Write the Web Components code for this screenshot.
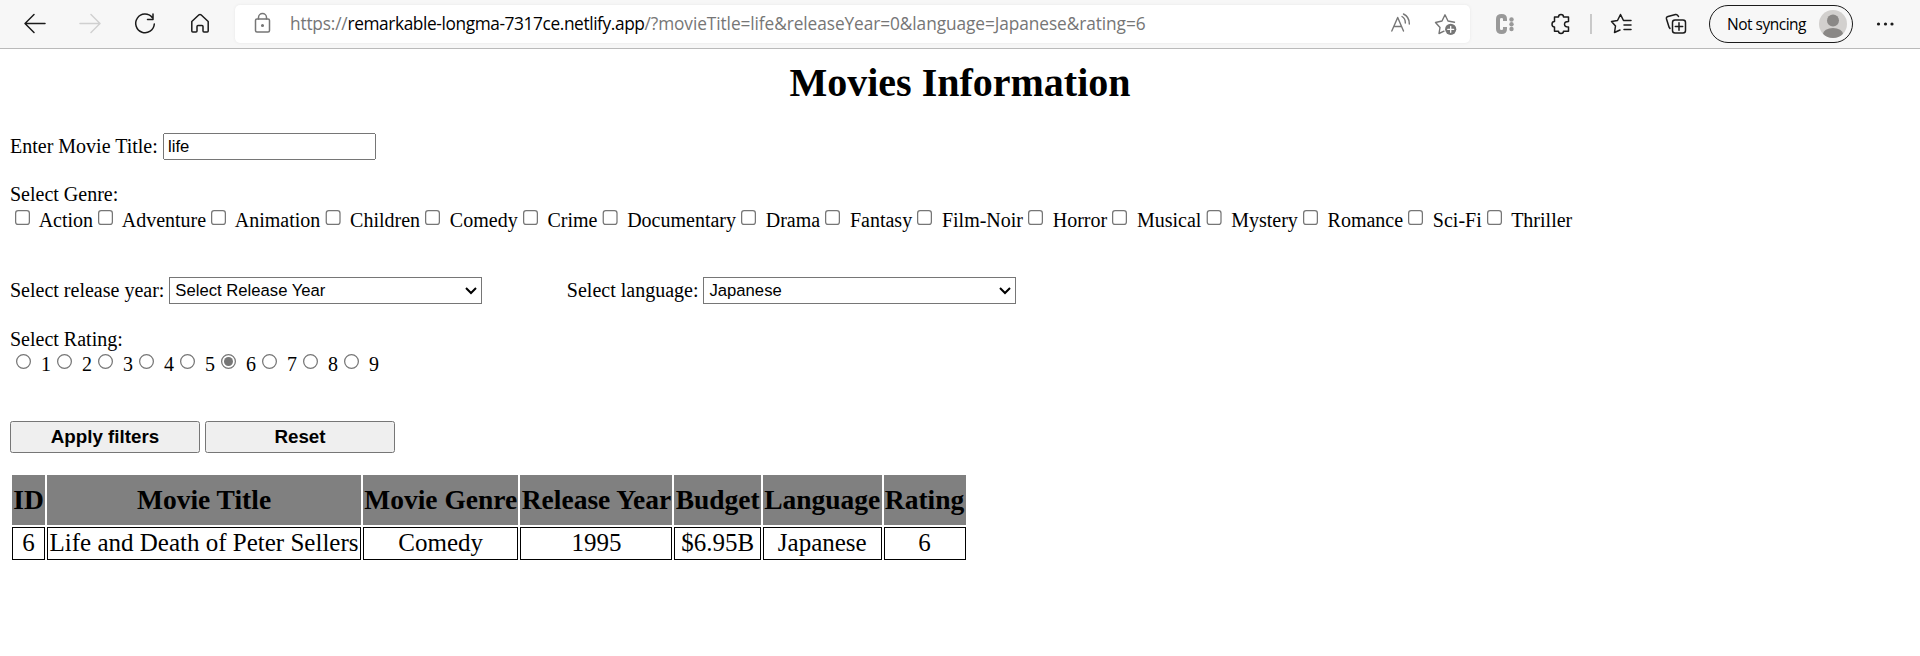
<!DOCTYPE html>
<html lang="en">
<head>
<meta charset="utf-8">
<title>Movies Information</title>
<style>
html,body{margin:0;background:#fff;overflow:hidden}
body{font-family:"Liberation Serif",serif;color:#000}
</style>
</head>
<body>
<browser-bar></browser-bar>
<movies-page></movies-page>
<script>
class ShadowElement extends HTMLElement {
  constructor(){ super(); this.attachShadow({mode:'open'}); }
  paint(html){ this.shadowRoot.innerHTML = html; }
}

/* Text stretched or tightened to a given width through letter-spacing. */
customElements.define('fit-text', class extends ShadowElement {
  connectedCallback(){
    this.paint('<style>:host{display:inline-block;white-space:pre}span{display:inline-block}</style><span></span>');
    const s = this.shadowRoot.querySelector('span');
    s.textContent = this.getAttribute('text');
    const want = +this.getAttribute('width');
    s.style.letterSpacing = (want - s.getBoundingClientRect().width) / s.textContent.length + 'px';
    this.style.width = want + 'px';
  }
});

customElements.define('browser-bar', class extends ShadowElement {
  connectedCallback(){
    this.paint(`<style>
:host{display:flex;align-items:flex-start;box-sizing:border-box;height:49px;background:#f7f7f7;border-bottom:1px solid #bababa;font-family:"Open Sans","Noto Sans",sans-serif}
svg{display:block;flex:none;fill:none;stroke:#1b1b1b;stroke-width:1.5;stroke-linecap:round;stroke-linejoin:round}
.address{display:flex;width:1235px;height:38px;margin-top:5px;background:#fff;border-radius:5px;box-shadow:0 0 3px #e6e6e6}
.address svg{margin-top:-5px;stroke:#767676}
.url{width:1101px;line-height:37px;font-size:17.3px;color:#767676;white-space:nowrap;display:flex}
.url b{font-weight:400;color:#000}
.profile{box-sizing:border-box;display:flex;align-items:center;justify-content:space-between;margin-top:5px;width:144px;height:38px;border:1.5px solid #1b1b1b;border-radius:19px;padding:0 5px 0 17px;font-size:15.5px}
</style>
<svg width="235" height="48">
<path d="M45 23.5H25.5M34 14.5L25 23.5L34 32.5"/>
<path stroke="#d0d0d0" d="M80 23.5H99.5M91 14.5L100 23.5L91 32.5"/>
<path d="M152.2 17.5A9.3 9.3 0 1 0 154.3 24M153 14V19.5H147.500"/>
<path d="M191.800 21.500L199 14.800Q200 14 201 14.800L208.200 21.500V31Q208.200 32 207.200 32H204Q203 32 203 31V26.500Q203 25.500 202 25.500H198Q197 25.500 197 26.500V31Q197 32 196 32H192.800Q191.800 32 191.800 31Z"/>
</svg>
<div class="address">
<svg width="55" height="48"><rect x="20.500" y="19" width="14" height="13" rx="1.500"/><path d="M23.500 19V17.500A4 4 0 0 1 31.500 17.500V19"/><circle cx="27.500" cy="25.500" r=".8" fill="#767676"/></svg>
<div class="url"><fit-text text="https://" width="57.500"></fit-text><b><fit-text text="remarkable-longma-7317ce.netlify.app" width="297"></fit-text></b><fit-text text="/?movieTitle=life&amp;releaseYear=0&amp;language=Japanese&amp;rating=6" width="501"></fit-text></div>
<svg width="79" height="48" viewBox="1391 0 79 48"><path stroke-width="1.400" d="M1391.800 31L1397.700 17.500L1403.500 31M1393.800 26.500H1401.500M1402 16.500Q1405.500 18.500 1405.300 23M1403.500 14Q1409.500 17 1409.300 24"/><path stroke-width="1.400" d="M1444 31.200L1439 33.500L1440 27.500L1435.500 22.500L1442 21L1445 14.800L1448 21L1454.500 22.200"/><circle cx="1450.700" cy="29.300" r="5.600" fill="#767676" stroke="none"/><path stroke="#fff" stroke-width="1.300" d="M1447.700 29.300H1453.700M1450.700 26.300V32.300"/></svg>
</div>
<svg width="239" height="48" viewBox="1470 0 239 48">
<path stroke="#999" stroke-width="4" stroke-linecap="butt" d="M1505 21V19Q1505 16 1501.700 16Q1498 16 1498 19V29Q1498 32 1501.700 32Q1505 32 1505 29V27"/>
<g fill="#999" stroke="none"><circle cx="1511.500" cy="19.500" r="2.200"/><circle cx="1511.500" cy="24.200" r="2.200"/><circle cx="1511.500" cy="29" r="2.200"/></g>
<path d="M1554.500 17H1558.500Q1558.500 14.500 1561 14.500Q1563.500 14.500 1563.500 17H1568.500V21.500Q1564.500 21.500 1564.500 24.200Q1564.500 27 1568.500 27V31.300H1563.500Q1563.500 33.500 1561 33.500Q1558.500 33.500 1558.500 31.300H1554.500V27Q1552 27 1552 24.300Q1552 21.600 1554.500 21.600Z"/>
<path stroke="#c4c4c4" stroke-linecap="butt" stroke-width="1.800" d="M1591 14V34"/>
<path d="M1620 30L1614.500 32.500L1615.500 26L1611.500 21.500L1617.500 20.500L1620.500 14.500L1623.500 20.500H1631M1624 25H1631M1624 29.500H1631"/>
<path d="M1670 28.500L1669 27L1666.500 19Q1666 17 1668 16.500L1675.500 14.500Q1677.500 14 1678.500 16.500"/><rect x="1672.500" y="20" width="13" height="13" rx="2.500"/><path d="M1679 22.800V30.200M1675.300 26.500H1682.700"/>
</svg>
<div class="profile"><fit-text text="Not syncing" width="79"></fit-text>
<svg width="28" height="28"><defs><clipPath id="c"><circle cx="14" cy="14" r="14"/></clipPath></defs><g clip-path="url(#c)" stroke="none"><rect width="28" height="28" fill="#d2d0ce"/><circle cx="14" cy="10.500" r="6" fill="#8a8886"/><ellipse cx="14" cy="24" rx="10" ry="6" fill="#8a8886"/></g></svg></div>
<svg width="67" height="48" viewBox="1853 0 67 48"><g fill="#1b1b1b" stroke="none"><circle cx="1878.500" cy="24" r="1.600"/><circle cx="1885.500" cy="24" r="1.600"/><circle cx="1892" cy="24" r="1.600"/></g></svg>`);
  }
});

customElements.define('form-row', class extends ShadowElement {
  connectedCallback(){
    this.paint('<style>:host{display:block;line-height:20px;font-size:16px;white-space:nowrap;box-sizing:border-box}</style><slot></slot>');
  }
});

customElements.define('choice-list', class extends ShadowElement {
  connectedCallback(){
    const type = this.getAttribute('type'), on = this.getAttribute('selected');
    this.paint(`<style>
:host{display:inline}
input{accent-color:#767676;margin:3px 2.800px 3px 4px;vertical-align:.8px}
input[type=radio]{margin:3px 3.200px 3px 4.600px;vertical-align:1.200px}
</style>` + this.getAttribute('items').split(',').map(t =>
      `<input type="${type}" name="choice"${t === on ? ' checked' : ''}><label> ${t}</label>`).join(''));
  }
});

customElements.define('movie-table', class extends ShadowElement {
  connectedCallback(){
    this.paint(`<style>
:host{display:block}
table{border-spacing:2px;font-size:20px;text-align:center}
th{background:gray;font-size:22px;height:40px;box-sizing:border-box;padding:1px}
td{border:1px solid #000;box-sizing:border-box;height:26.800px;padding:1px 1.200px}
</style>
<table><tr><th>ID</th><th>Movie Title</th><th>Movie Genre</th><th>Release Year</th><th>Budget</th><th>Language</th><th>Rating</th></tr>
<tr><td>6</td><td>Life and Death of Peter Sellers</td><td>Comedy</td><td>1995</td><td>$6.95B</td><td>Japanese</td><td>6</td></tr></table>`);
  }
});

customElements.define('movies-page', class extends ShadowElement {
  connectedCallback(){
    this.paint(`<style>
:host{display:block;zoom:1.25;padding:0 8px;font-family:"Liberation Serif",serif}
h1{margin:0;padding-top:9px;height:58.2px;font-size:32px;line-height:36px;text-align:center}
input,select,button{font-family:"Liberation Sans",Arial,sans-serif;font-size:13.333px}
input{box-sizing:border-box;width:170.600px;height:21.6px;padding:1px 2.600px;vertical-align:.8px}
select{width:249.800px;height:22px;background:#fff;vertical-align:.8px}
button{width:152px;height:25.6px;font-size:15px;font-weight:700;padding:0}
.field{height:39.2px}.caption{height:19.200px}.choices{height:56.600px}
.selects{height:40.200px}
.rating-caption{height:18.200px}
.gap{display:inline-block;width:68.200px}
.rating{height:57px}.actions{height:41.200px}
</style>
<h1>Movies Information</h1>
<form-row class="field"><label>Enter Movie Title: </label><input type="text" value="life"></form-row>
<form-row class="caption">Select Genre:</form-row>
<form-row class="choices"><choice-list type="checkbox" items="Action,Adventure,Animation,Children,Comedy,Crime,Documentary,Drama,Fantasy,Film-Noir,Horror,Musical,Mystery,Romance,Sci-Fi,Thriller"></choice-list></form-row>
<form-row class="selects"><label>Select release year: </label><select><option>Select Release Year</option></select><span class="gap"></span><label>Select language: </label><select><option>Japanese</option></select></form-row>
<form-row class="rating-caption">Select Rating:</form-row>
<form-row class="rating"><choice-list type="radio" items="1,2,3,4,5,6,7,8,9" selected="6"></choice-list></form-row>
<form-row class="actions"><button>Apply filters</button> <button>Reset</button></form-row>
<movie-table></movie-table>`);
  }
});
</script>
</body>
</html>
